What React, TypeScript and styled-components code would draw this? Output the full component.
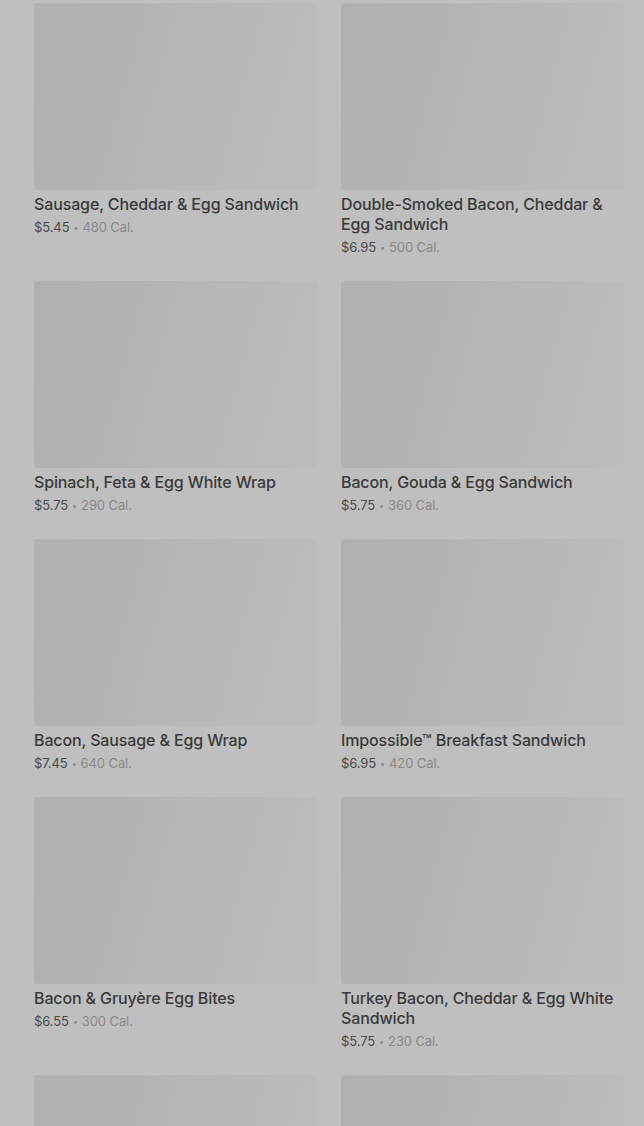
import React from "react";
import styled, { createGlobalStyle } from "styled-components";

const GlobalStyle = createGlobalStyle`
  html, body {
    margin: 0;
    padding: 0;
    background: #bfbfbf;
  }
  body {
    font-family: Inter, "Noto Sans", "Liberation Sans", sans-serif;
    -webkit-font-smoothing: antialiased;
    overflow: hidden;
  }
`;

const Page = styled.main`
  padding: 3px 20px 0 34px;
  background: #bfbfbf;
  height: 1126px;
  overflow: hidden;
  box-sizing: border-box;
`;

const Grid = styled.ul`
  list-style: none;
  margin: 0;
  padding: 0;
  display: grid;
  grid-template-columns: repeat(2, 283px);
  column-gap: 24px;
  row-gap: 24px;
  align-items: start;
`;

const Card = styled.li`
  display: flex;
  flex-direction: column;
`;

const ImageSlot = styled.div`
  height: 187px;
  border-radius: 3px;
  background: linear-gradient(
    105deg,
    #b1b1b1 0%,
    #b3b3b3 30%,
    #b6b6b6 50%,
    #bababa 75%,
    #bcbcbc 100%
  );
`;

const Title = styled.h3`
  margin: 4px 0 0;
  font-size: 16px;
  line-height: 20px;
  font-weight: 500;
  color: #3a3a3a;
  letter-spacing: -0.13px;
`;

const Meta = styled.p`
  margin: 3px 0 0;
  height: 20px;
  font-size: 13px;
  line-height: 20px;
  color: #8a8a8a;
  letter-spacing: -0.1px;
`;

const Price = styled.span`
  color: #4a4a4a;
`;

const Dot = styled.span`
  display: inline-block;
  margin: 0 4px;
  font-size: 9px;
  line-height: 1;
  vertical-align: 1px;
`;

type Item = { name: string; price: string; cal: string };

const items: Item[] = [
  { name: "Sausage, Cheddar & Egg Sandwich", price: "$5.45", cal: "480 Cal." },
  { name: "Double-Smoked Bacon, Cheddar & Egg Sandwich", price: "$6.95", cal: "500 Cal." },
  { name: "Spinach, Feta & Egg White Wrap", price: "$5.75", cal: "290 Cal." },
  { name: "Bacon, Gouda & Egg Sandwich", price: "$5.75", cal: "360 Cal." },
  { name: "Bacon, Sausage & Egg Wrap", price: "$7.45", cal: "640 Cal." },
  { name: "Impossible™ Breakfast Sandwich", price: "$6.95", cal: "420 Cal." },
  { name: "Bacon & Gruyère Egg Bites", price: "$6.55", cal: "300 Cal." },
  { name: "Turkey Bacon, Cheddar & Egg White Sandwich", price: "$5.75", cal: "230 Cal." },
  { name: "Egg White & Roasted Red Pepper Egg Bites", price: "$5.75", cal: "170 Cal." },
  { name: "Ham & Swiss on Baguette", price: "$6.95", cal: "470 Cal." },
];

export default function App() {
  return (
    <>
      <GlobalStyle />
      <Page>
        <Grid>
          {items.map((it) => (
            <Card key={it.name}>
              <ImageSlot />
              <Title>{it.name}</Title>
              <Meta>
                <Price>{it.price}</Price>
                <Dot>•</Dot>
                {it.cal}
              </Meta>
            </Card>
          ))}
        </Grid>
      </Page>
    </>
  );
}
